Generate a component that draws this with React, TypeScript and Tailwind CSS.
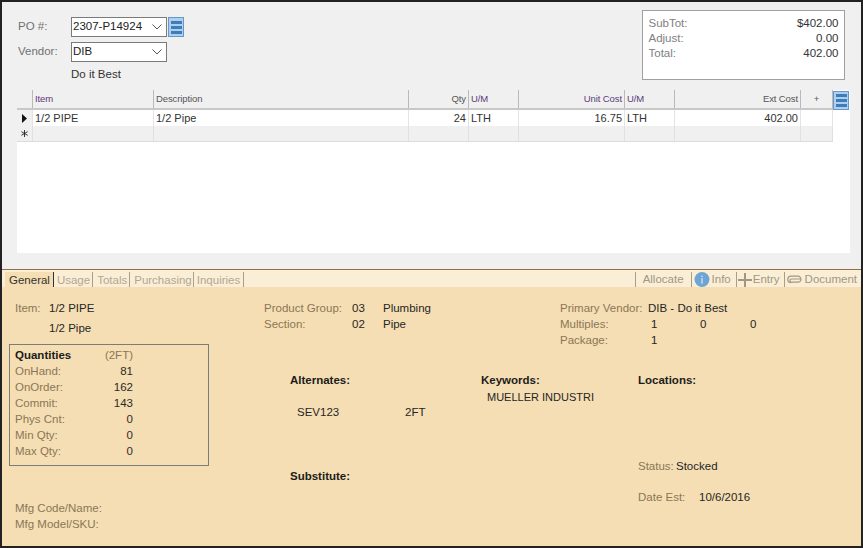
const label = "text-[#8a7657]";
const dark = "text-[#262626]";

function Menu({ className }: { className: string }) {
  return (
    <div className={`flex flex-col items-center justify-center gap-[2px] bg-[#acd0f2] border border-[#6b96c4] ${className}`}>
      <div className="w-[11px] h-[3px] bg-[#3f7cb8]" />
      <div className="w-[11px] h-[3px] bg-[#3f7cb8]" />
      <div className="w-[11px] h-[3px] bg-[#3f7cb8]" />
    </div>
  );
}

function Combo({ text }: { text: string }) {
  return (
    <div className="w-[96px] h-[20px] border border-[#7a7a7a] bg-white flex items-center justify-between pl-[1px] pr-[4px] text-[11.5px] text-[#222]">
      <span>{text}</span>
      <svg width="10" height="6" viewBox="0 0 10 6" fill="none" stroke="#555" strokeWidth="1"><path d="M0.5 0.5 5 5 9.5 0.5" /></svg>
    </div>
  );
}

const cols = [
  { w: "w-[16px]" },
  { w: "w-[121px]", h: "Item", c: "1/2 PIPE", purple: true },
  { w: "w-[255px]", h: "Description", c: "1/2 Pipe" },
  { w: "w-[60px]", h: "Qty", c: "24", right: true },
  { w: "w-[50px]", h: "U/M", c: "LTH", purple: true },
  { w: "w-[106px]", h: "Unit Cost", c: "16.75", right: true, purple: true },
  { w: "w-[50px]", h: "U/M", c: "LTH", purple: true },
  { w: "w-[126px]", h: "Ext Cost", c: "402.00", right: true },
  { w: "w-[32px]", h: "+", center: true },
];

function Grid() {
  return (
    <div className="ml-[15px] mr-[11px] h-[163px] bg-white relative">
      <div className="flex h-[20px] bg-[#f0f0f0] border-b-2 border-[#c8c8c8] w-[816px]">
        {cols.map((c, i) => (
          <div key={i} className={`${c.w} h-full border-r border-[#b9b9b9] flex items-center px-[2px] text-[9.5px] tracking-[-0.1px] ${c.purple ? "text-[#5b3a78]" : "text-[#555]"} ${c.right ? "justify-end" : ""} ${c.center ? "justify-center" : ""}`}>
            {c.h}
          </div>
        ))}
      </div>
      <div className="flex h-[16px] bg-white w-[816px]">
        {cols.map((c, i) => (
          <div key={i} className={`${c.w} h-full border-r border-[#e4e4e4] flex items-center px-[2px] text-[11px] text-[#333] ${c.right ? "justify-end" : ""} ${i === 0 ? "bg-[#f0f0f0] justify-center" : ""}`}>
            {i === 0 ? (
              <svg width="5" height="9" viewBox="0 0 5 9"><path d="M0 0 5 4.5 0 9Z" fill="#111" /></svg>
            ) : c.c}
          </div>
        ))}
      </div>
      <div className="flex h-[16px] bg-[#f0f0f0] border-b border-[#dcdcdc] w-[816px]">
        {cols.map((c, i) => (
          <div key={i} className={`${c.w} h-full border-r border-[#e0e0e0] flex items-center justify-center`}>
            {i === 0 ? (
              <svg width="7" height="7" viewBox="0 0 7 7" stroke="#222" strokeWidth="0.9"><path d="M3.5 0v7M0.4 1.7 6.6 5.3M0.4 5.3 6.6 1.7" /></svg>
            ) : null}
          </div>
        ))}
      </div>
      <Menu className="absolute right-[1px] top-[1px] w-[16px] h-[19px]" />
    </div>
  );
}

function Tab({ t, active, pad, sep }: { t: string; active?: boolean; pad: string; sep: string }) {
  return (
    <div className={`h-[15px] flex items-center text-[11.5px] ${pad} ${active ? "text-[#333] bg-[#f5deb3]" : "text-[#b0a795]"}`}>
      <span className="pt-[3px]">{t}</span>
      <div className={`w-[1px] h-[15px] ${sep} ${active ? "bg-[#333]" : "bg-[#a89e8c]"}`} />
    </div>
  );
}

function QRow({ l, v }: { l: string; v: string }) {
  return (
    <div className="flex h-[16px] items-center justify-between w-[118px]">
      <span className={label}>{l}</span>
      <span className="text-[#2a2a2a]">{v}</span>
    </div>
  );
}

export default function App() {
  return (
    <div className="w-[863px] h-[548px] bg-[#222] flex flex-col pt-[2px] pb-[2px] pl-[2px] pr-[2px] overflow-hidden text-[11.5px] font-['Liberation_Sans',Arial,sans-serif] leading-none">
      <div className="h-[268px] bg-[#f0f0f0] flex flex-col border-b border-[#8d7345] shrink-0">
        <div className="h-[88px] flex justify-between shrink-0">
          <div className="pt-[15px] pl-[16px] flex flex-col">
            <div className="flex items-center h-[20px]">
              <span className="w-[53px] text-[#707070]">PO #:</span>
              <Combo text="2307-P14924" />
              <Menu className="ml-[1px] w-[16px] h-[20px]" />
            </div>
            <div className="flex items-center h-[20px] mt-[5px]">
              <span className="w-[53px] text-[#707070]">Vendor:</span>
              <Combo text="DIB" />
            </div>
            <div className="ml-[53px] mt-[6px] text-[#333] h-[14px] flex items-center">Do it Best</div>
          </div>
          <div className="mt-[8px] mr-[16px] w-[203px] h-[70px] border-[1.5px] border-[#a0a0a0] bg-white px-[5.5px] pt-[5px] text-[11.5px]">
            {[["SubTot:", "$402.00"], ["Adjust:", "0.00"], ["Total:", "402.00"]].map(([a, b]) => (
              <div key={a} className="flex justify-between h-[15px] items-center">
                <span className="text-[#808080]">{a}</span>
                <span className="text-[#333]">{b}</span>
              </div>
            ))}
          </div>
        </div>
        <Grid />
      </div>
      <div className="flex-1 bg-[#f5deb3] flex flex-col">
        <div className="h-[17px] bg-[#fbeed6] flex items-start justify-between pl-[3px] pr-[4px] pt-[2px] shrink-0">
          <div className="flex">
            <Tab t="General" active pad="pl-[4px]" sep="ml-[3px]" />
            <Tab t="Usage" pad="pl-[3px]" sep="ml-[2px]" />
            <Tab t="Totals" pad="pl-[4px]" sep="ml-[2px]" />
            <Tab t="Purchasing" pad="pl-[4px]" sep="ml-[1px]" />
            <Tab t="Inquiries" pad="pl-[3px]" sep="ml-[3px]" />
          </div>
          <div className="flex items-center h-[15px] text-[#a09785]">
            <div className="w-[1px] h-[15px] bg-[#a89e8c] mr-[7px]" />
            <span className="pt-[1px]">Allocate</span>
            <div className="w-[1px] h-[15px] bg-[#a89e8c] ml-[7px] mr-[2px]" />
            <svg width="16" height="15" viewBox="0 0 16 16" className="mr-[2px]"><circle cx="8" cy="8" r="8" fill="#6fa5d4" /><rect x="7.2" y="6.5" width="1.6" height="6" fill="#c4dcf0" /><rect x="7.2" y="3.8" width="1.6" height="1.6" fill="#c4dcf0" /></svg>
            <span className="pt-[1px]">Info</span>
            <div className="w-[1px] h-[15px] bg-[#a89e8c] ml-[5px] mr-[1px]" />
            <svg width="14" height="14" viewBox="0 0 14 14" className="mr-[1px]"><path d="M6 0h2v6h6v2H8v6H6V8H0V6h6z" fill="#a09785" /></svg>
            <span className="pt-[1px]">Entry</span>
            <div className="w-[1px] h-[15px] bg-[#a89e8c] ml-[4px] mr-[2px]" />
            <svg width="15" height="9" viewBox="0 0 15 9" fill="none" stroke="#a09785" strokeWidth="1.2" className="mr-[3px]"><path d="M14 4H4.5a1.6 1.6 0 0 0 0 3.2H11a3 3 0 0 0 0-6H4a3.2 3.2 0 0 0 0 6.4" /></svg>
            <span className="pt-[1px]">Document</span>
          </div>
        </div>
        <div className="flex flex-1">
          <div className="w-[262px] shrink-0 pl-[7px] pt-[16px] flex flex-col">
            <div className="flex items-center h-[12px] pl-[6px]">
              <span className={`w-[34px] ${label}`}>Item:</span>
              <span className={dark}>1/2 PIPE</span>
            </div>
            <div className={`pl-[40px] mt-[8px] h-[12px] flex items-center ${dark}`}>1/2 Pipe</div>
            <div className="mt-[9px] w-[200px] h-[122px] border border-[#7d7d78] pl-[5px] pt-[3px]">
              <div className="flex h-[16px] items-center justify-between w-[118px]">
                <span className="font-bold text-[#1c1c1c]">Quantities</span>
                <span className="text-[#8a7657]">(2FT)</span>
              </div>
              <QRow l="OnHand:" v="81" />
              <QRow l="OnOrder:" v="162" />
              <QRow l="Commit:" v="143" />
              <QRow l="Phys Cnt:" v="0" />
              <QRow l="Min Qty:" v="0" />
              <QRow l="Max Qty:" v="0" />
            </div>
            <div className={`pl-[6px] mt-[37px] flex flex-col gap-[4px] ${label}`}>
              <div className="h-[12px] flex items-center">Mfg Code/Name:</div>
              <div className="h-[12px] flex items-center">Mfg Model/SKU:</div>
            </div>
          </div>
          <div className="flex-1 flex flex-col pt-[14px]">
            <div className="flex h-[58px] shrink-0">
              <div className="w-[296px] shrink-0">
                <div className="flex h-[16px] items-center">
                  <span className={`w-[88px] ${label}`}>Product Group:</span>
                  <span className={`w-[31px] ${dark}`}>03</span>
                  <span className={dark}>Plumbing</span>
                </div>
                <div className="flex h-[16px] items-center">
                  <span className={`w-[88px] ${label}`}>Section:</span>
                  <span className={`w-[31px] ${dark}`}>02</span>
                  <span className={dark}>Pipe</span>
                </div>
              </div>
              <div>
                <div className="flex h-[16px] items-center">
                  <span className={`w-[88px] ${label}`}>Primary Vendor:</span>
                  <span className={dark}>DIB - Do it Best</span>
                </div>
                <div className="flex h-[16px] items-center">
                  <span className={`w-[91px] ${label}`}>Multiples:</span>
                  <span className={`w-[49px] ${dark}`}>1</span>
                  <span className={`w-[50px] ${dark}`}>0</span>
                  <span className={dark}>0</span>
                </div>
                <div className="flex h-[16px] items-center">
                  <span className={`w-[91px] ${label}`}>Package:</span>
                  <span className={dark}>1</span>
                </div>
              </div>
            </div>
            <div className="flex pl-[26px] pt-[14px] flex-1">
              <div className="w-[191px] shrink-0 flex flex-col">
                <div className="font-bold text-[#1c1c1c] h-[16px] flex items-center">Alternates:</div>
                <div className={`flex mt-[16px] h-[16px] items-center pl-[7px] ${dark}`}>
                  <span className="w-[108px]">SEV123</span>
                  <span>2FT</span>
                </div>
                <div className="font-bold text-[#1c1c1c] h-[16px] flex items-center mt-[48px]">Substitute:</div>
              </div>
              <div className="w-[157px] shrink-0 flex flex-col">
                <div className="font-bold text-[#1c1c1c] h-[16px] flex items-center">Keywords:</div>
                <div className={`h-[16px] flex items-center pl-[6px] text-[11px] ${dark}`}>MUELLER INDUSTRI</div>
              </div>
              <div className="flex flex-col">
                <div className="font-bold text-[#1c1c1c] h-[16px] flex items-center">Locations:</div>
                <div className="flex h-[16px] items-center mt-[70px]">
                  <span className={`w-[38px] ${label}`}>Status:</span>
                  <span className={dark}>Stocked</span>
                </div>
                <div className="flex h-[16px] items-center mt-[15px]">
                  <span className={`w-[61px] ${label}`}>Date Est:</span>
                  <span className={dark}>10/6/2016</span>
                </div>
              </div>
            </div>
          </div>
        </div>
      </div>
    </div>
  );
}
